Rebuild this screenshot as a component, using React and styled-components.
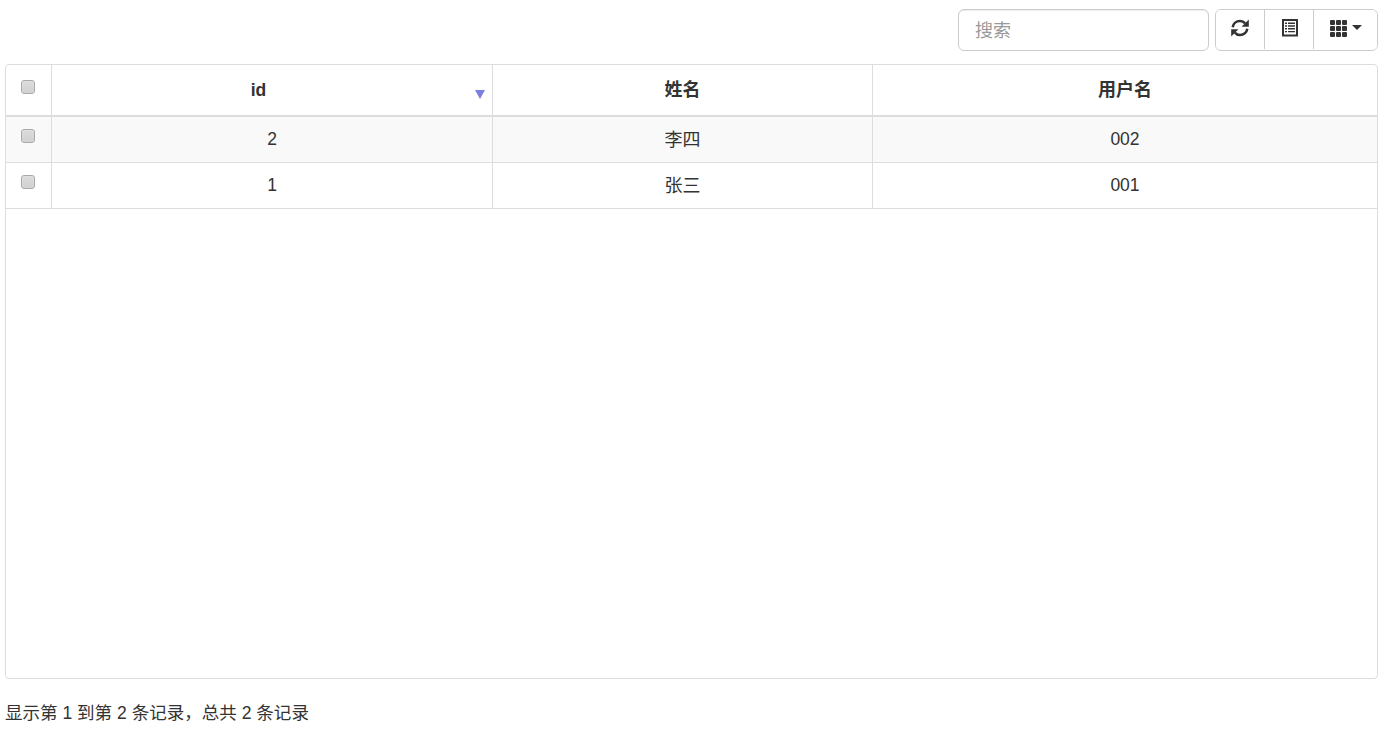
import React from 'react';
import styled, { createGlobalStyle } from 'styled-components';

const rows = [
  { id: 2, name: '李四', username: '002' },
  { id: 1, name: '张三', username: '001' },
];

const RefreshIcon = () => (
  <svg width='18' height='18' viewBox='0 0 18 18'>
    {[0, 180].map((angle) => (
      <g key={angle} transform={`rotate(${angle} 9 9)`}>
        <path d='M1.7 8.2C2.300 4.500 5.300 2 9 2c2 0 3.900 .9 5.100 2.400' fill='none' stroke='#333' strokeWidth='2.600' />
        <path d='M17.800 .6v7.200h-7.200z' fill='#333' />
      </g>
    ))}
  </svg>
);

const ListIcon = () => (
  <svg width='18' height='18' viewBox='0 0 18 18'>
    <rect x='2' y='0' width='16' height='17.500' rx='.5' fill='#333' />
    <rect x='4' y='2' width='12' height='13.500' fill='#fff' />
    <path d='M5 3.500h2v1.400H5zM8 3.500h7v1.400H8zM5 6.300h2v1.400H5zM8 6.300h7v1.400H8zM5 9.100h2v1.400H5zM8 9.100h7v1.400H8zM5 11.900h2v1.400H5zM8 11.900h7v1.400H8z' fill='#333' />
  </svg>
);

const GridIcon = () => (
  <svg width='18' height='18' viewBox='0 0 18 18' fill='#333'>
    {[1, 7, 13].map((y) =>
      [0, 6, 12].map((x) => (
        <rect key={`${x}-${y}`} x={x} y={y} width='5' height='5' rx='1' />
      ))
    )}
  </svg>
);

const App = () => {
  return (
    <Page>
      <GlobalStyle />
      <Toolbar>
        <SearchInput type='text' placeholder='搜索' />
        <ButtonGroup>
          <ToolButton $width={49} title='刷新'>
            <RefreshIcon />
          </ToolButton>
          <ToolButton $width={49} title='切换'>
            <ListIcon />
          </ToolButton>
          <ToolButton $width={64} title='列'>
            <GridIcon />
            <Caret />
          </ToolButton>
        </ButtonGroup>
      </Toolbar>

      <TableFrame>
        <Table>
          <colgroup>
            <col style={{ width: 46 }} />
            <col style={{ width: 441 }} />
            <col style={{ width: 380 }} />
            <col />
          </colgroup>
          <thead>
            <tr>
              <HeadCell $check>
                <CheckBox type='checkbox' />
              </HeadCell>
              <HeadCell $sorted>
                id
                <SortArrow />
              </HeadCell>
              <HeadCell $cjk>姓名</HeadCell>
              <HeadCell $cjk $last>用户名</HeadCell>
            </tr>
          </thead>
          <tbody>
            {rows.map((row, i) => (
              <Row key={row.id} $odd={i % 2 === 0}>
                <Cell $check>
                  <CheckBox type='checkbox' />
                </Cell>
                <Cell>{row.id}</Cell>
                <Cell $cjk>{row.name}</Cell>
                <Cell $last>{row.username}</Cell>
              </Row>
            ))}
          </tbody>
        </Table>
      </TableFrame>

      <PageInfo>显示第 1 到第 2 条记录，总共 2 条记录</PageInfo>
    </Page>
  );
};

const GlobalStyle = createGlobalStyle`
  html, body {
    margin: 0;
    padding: 0;
    background: #fff;
  }
  body {
    font-family: "Liberation Sans", "Noto Sans CJK SC", sans-serif;
    font-size: 17.5px;
    color: #333;
  }
  * {
    box-sizing: border-box;
  }
`;

const Page = styled.div`
  width: 1395px;
  height: 731px;
  overflow: hidden;
  padding: 9px 17px 0 5px;
`;

const Toolbar = styled.div`
  display: flex;
  justify-content: flex-end;
  gap: 6px;
  height: 42px;
  margin-bottom: 13px;
`;

const SearchInput = styled.input`
  width: 251px;
  height: 42px;
  padding: 2px 16px 0;
  border: 1px solid #ccc;
  border-radius: 6px;
  box-shadow: inset 0 1px 1px rgba(0, 0, 0, 0.075);
  font-family: inherit;
  font-size: 18px;
  color: #555;
  outline: none;

  &::placeholder {
    color: #999;
    opacity: 1;
  }
`;

const ButtonGroup = styled.div`
  display: flex;
  height: 42px;
  padding-bottom: 1px;
  border: 1px solid #ccc;
  border-radius: 6px;
  background: #fff;
  overflow: hidden;
`;

const ToolButton = styled.button`
  display: flex;
  align-items: center;
  justify-content: center;
  gap: 4px;
  width: ${(p) => p.$width}px;
  padding: 0 0 4px;
  border: 0;
  border-right: 1px solid #ccc;
  background: #fff;
  color: #333;

  &:last-child {
    border-right: 0;
    width: ${(p) => p.$width - 1}px;
  }
`;

const Caret = styled.span`
  width: 0;
  height: 0;
  border-top: 5px solid #333;
  border-left: 5px solid transparent;
  border-right: 5px solid transparent;
`;

const TableFrame = styled.div`
  height: 615px;
  border: 1px solid #ddd;
  border-radius: 4px;
  overflow: hidden;
`;

const Table = styled.table`
  width: 100%;
  table-layout: fixed;
  border-collapse: separate;
  border-spacing: 0;
`;

const HeadCell = styled.th`
  position: relative;
  height: 52px;
  padding: ${(p) => (p.$check ? '15px 0 0' : '0')};
  padding-right: ${(p) => (p.$sorted ? '27px' : '0')};
  padding-bottom: ${(p) => (p.$cjk ? '4px' : '0')};
  border-bottom: 2px solid #ddd;
  border-right: ${(p) => (p.$last ? '0' : '1px solid #ddd')};
  font-size: ${(p) => (p.$cjk ? '18px' : '17.5px')};
  font-weight: 700;
  text-align: center;
  vertical-align: ${(p) => (p.$check ? 'top' : 'middle')};
`;

const SortArrow = styled.span`
  position: absolute;
  right: 7px;
  top: 25px;
  width: 0;
  height: 0;
  border-top: 9px solid #7a7fe0;
  border-left: 5px solid transparent;
  border-right: 5px solid transparent;
`;

const Row = styled.tr`
  background: ${(p) => (p.$odd ? '#f9f9f9' : '#fff')};
`;

const Cell = styled.td`
  height: 46px;
  padding: ${(p) => (p.$check ? '12px 0 0' : '0')};
  padding-bottom: ${(p) => (p.$cjk ? '4px' : '0')};
  border-bottom: 1px solid #ddd;
  border-right: ${(p) => (p.$last ? '0' : '1px solid #ddd')};
  font-size: ${(p) => (p.$cjk ? '18px' : '17.5px')};
  text-align: center;
  vertical-align: ${(p) => (p.$check ? 'top' : 'middle')};
`;

const CheckBox = styled.input`
  appearance: none;
  display: block;
  width: 14px;
  height: 14px;
  margin: 0 0 0 15px;
  border: 1px solid #a9a9a9;
  border-radius: 3px;
  background: linear-gradient(#dcdcdc, #d0d0d0);
  box-shadow: inset 0 0 1px #fff;
`;

const PageInfo = styled.div`
  margin-top: 22px;
  font-size: 17.55px;
  line-height: 25px;
`;

export default App;
